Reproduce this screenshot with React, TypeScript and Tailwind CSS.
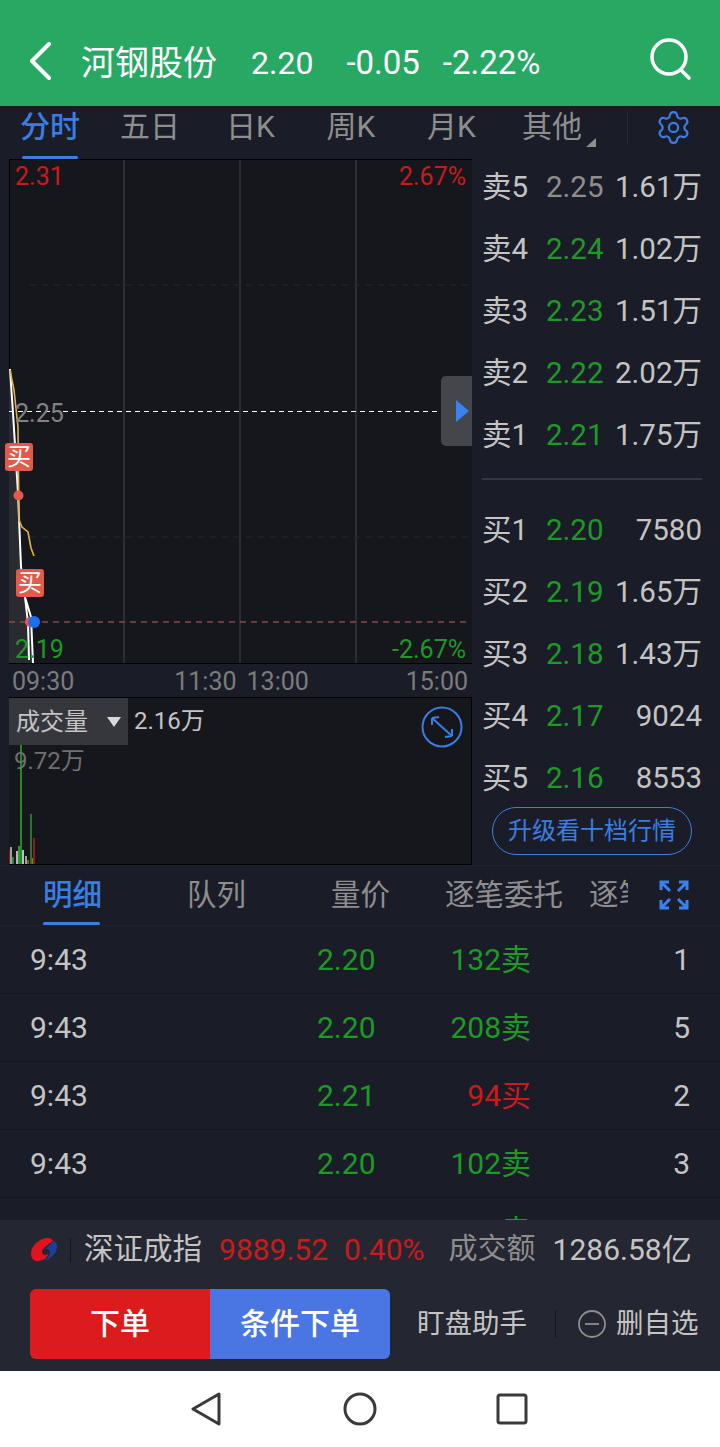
import { Settings } from "lucide-react";

const asks = [
  { label: "卖5", price: "2.25", vol: "1.61万", flat: true },
  { label: "卖4", price: "2.24", vol: "1.02万" },
  { label: "卖3", price: "2.23", vol: "1.51万" },
  { label: "卖2", price: "2.22", vol: "2.02万" },
  { label: "卖1", price: "2.21", vol: "1.75万" },
];

const bids = [
  { label: "买1", price: "2.20", vol: "7580" },
  { label: "买2", price: "2.19", vol: "1.65万" },
  { label: "买3", price: "2.18", vol: "1.43万" },
  { label: "买4", price: "2.17", vol: "9024" },
  { label: "买5", price: "2.16", vol: "8553" },
];

const trades = [
  { time: "9:43", price: "2.20", up: false, size: "132卖", n: "1" },
  { time: "9:43", price: "2.20", up: false, size: "208卖", n: "5" },
  { time: "9:43", price: "2.21", up: true, size: "94买", n: "2" },
  { time: "9:43", price: "2.20", up: false, size: "102卖", n: "3" },
];

// x, width, top y, colour of the volume bars (page coordinates)
const volumeBars = [
  [8, 2, 850, "#7a1c1c"], [10, 2, 847, "#a0a0a0"], [12, 2, 857, "#1f8a28"], [16, 2, 851, "#b8b8b8"],
  [18, 2, 846, "#2a9a30"], [20, 2, 743, "#1f8a28"], [22, 2, 850, "#c0c0c0"], [25, 2, 856, "#a0a0a0"],
  [27, 2, 860, "#8a5a1c"], [30, 2, 814, "#1f7a28"], [32, 1, 858, "#8a7a1c"], [33, 2, 838, "#8a1c1c"],
] as const;

function BookRow({ label, price, vol, flat }: { label: string; price: string; vol: string; flat?: boolean }) {
  return (
    <div className="flex h-[62px] items-center pl-[10px] pr-[18px] text-[29.500px] leading-none text-[#c4c4c4]">
      <span className="w-[64px]">{label}</span>
      <span className={flat ? "w-[68px] text-[#8e8e8e]" : "w-[68px] text-[#1d9a26]"}>{price}</span>
      <span className="flex-1 text-right">{vol}</span>
    </div>
  );
}

function BuyTag({ className }: { className: string }) {
  return (
    <div className={`absolute flex h-[28px] w-[28px] items-center justify-center rounded-[3px] bg-[#e25a4a] text-[24px] leading-none text-white ${className}`}>
      买
    </div>
  );
}

function ChartDrawing() {
  return (
    <svg className="absolute left-[-1px] top-0" width="462" height="504" viewBox="9 160 462 504">
      <path d="M9 369 L10 369 L13 413 L18 493 L21 567 L25 597 L28 623 L32 617 L33 663 L9 663 Z" fill="#2a2b31" />
      <path d="M124 160V663M240 160V663M356 160V663" stroke="#2c2d33" strokeWidth="2" />
      <path d="M30 285H471M30 537H471" stroke="#26272c" strokeWidth="1" strokeDasharray="6 6" />
      <path d="M9 411.5H471" stroke="#ffffff" strokeWidth="1" strokeDasharray="5 4" />
      <path d="M9 622H471" stroke="#8a4a48" strokeWidth="1.5" strokeDasharray="6 5" />
      <path d="M10 369 L13 413 L18 493 L21 567 L25 597 L28 623 L29 660 M25 597 L31 617 L33 663" fill="none" stroke="#ffffff" strokeWidth="2" />
      <path d="M10 370 L14 390 L18 427 L19 520 L22 527 L28 532 L31 548 L34 556" fill="none" stroke="#e0b440" strokeWidth="1.6" />
      <circle cx="18.5" cy="495.5" r="5" fill="#e25a4a" />
      <circle cx="30" cy="622" r="5" fill="#e25a4a" />
      <circle cx="34" cy="622" r="6" fill="#1d6ff0" />
    </svg>
  );
}

function ShenzhenLogo() {
  return (
    <svg width="28" height="25" viewBox="0 0 28 25">
      <path d="M18 1C10 1 1 8 1 17C1 22 5 25 9 24C14 23 18 20 18 17C16 19 12 18 12 15C12 11 18 8 23 4C22 2 20 1 18 1Z" fill="#e0141e" />
      <path d="M24 4C27 6 28 9 26 14C24 19 18 23 13 24C17 22 20 19 20 15C20 12 17 11 15 12C18 9 21 7 24 4Z" fill="#1c3f9c" />
    </svg>
  );
}

export default function App() {
  return (
    <div className="flex h-[1447px] w-[720px] flex-col overflow-hidden bg-[#1a1d28] font-[Roboto,'Noto_Sans_CJK_SC',sans-serif]">
      {/* title bar */}
      <header className="flex h-[106px] shrink-0 items-end bg-[#27a863] pb-[23px] text-white">
        <svg className="ml-[28px] mb-[3px]" width="24" height="38" viewBox="0 0 24 38" fill="none" stroke="#fff" strokeWidth="4" strokeLinecap="round" strokeLinejoin="round">
          <path d="M21 2 L4 19 L21 36" />
        </svg>
        <span className="ml-[29px] text-[34px] leading-[40px]">河钢股份</span>
        <span className="ml-[34px] text-[32px] leading-[40px]">2.20</span>
        <span className="ml-[33px] text-[33px] leading-[40px]">-0.05</span>
        <span className="ml-[23px] text-[33px] leading-[40px]">-2.22%</span>
        <svg className="ml-auto mr-[28px] mb-[2px]" width="44" height="44" viewBox="0 0 44 44" fill="none" stroke="#fff" strokeWidth="3.500" strokeLinecap="round">
          <circle cx="21" cy="20" r="17" />
          <path d="M33 33 L41 41" />
        </svg>
      </header>

      {/* period tabs */}
      <nav className="relative flex h-[53px] shrink-0 text-[30px] leading-none text-[#8e8e8e]">
        <div className="relative flex w-[100px] justify-center pt-[6px] font-medium text-[#3b7de0]">
          分时
          <span className="absolute bottom-0 left-[22px] h-[3px] w-[56px] rounded-full bg-[#3b7de0]" />
        </div>
        <div className="flex w-[100px] justify-center pt-[6px]">五日</div>
        <div className="flex w-[101px] justify-center pt-[6px]">日K</div>
        <div className="flex w-[100px] justify-center pt-[6px]">周K</div>
        <div className="flex w-[101px] justify-center pt-[6px]">月K</div>
        <div className="relative flex w-[100px] justify-center pt-[6px]">
          其他
          <span className="absolute left-[84px] top-[32px] h-0 w-0 border-b-[9px] border-l-[10px] border-b-[#8e8e8e] border-l-transparent" />
        </div>
        <div className="ml-[25px] mt-[5px] h-[34px] w-px bg-[#262934]" />
        <Settings className="ml-[27px] mt-[3px]" size={37} color="#3b7de0" strokeWidth={1.4} />
      </nav>

      {/* chart + order book */}
      <section className="flex h-[706px] shrink-0">
        <div className="ml-[9px] flex w-[463px] shrink-0 flex-col">
          <div className="relative h-[504px] border-l border-t border-black bg-[#16171d] text-[25px] leading-none">
            <ChartDrawing />
            <span className="absolute left-[5px] top-[4px] text-[#c81c1c]">2.31</span>
            <span className="absolute right-[6px] top-[4px] text-[#c81c1c]">2.67%</span>
            <span className="absolute left-[5px] top-[241px] text-[#828282]">2.25</span>
            <span className="absolute bottom-[1px] left-[5px] text-[#1d9a26]">2.19</span>
            <span className="absolute bottom-[1px] right-[6px] text-[#1d9a26]">-2.67%</span>
            <BuyTag className="left-[-5px] top-[283px]" />
            <BuyTag className="left-[6px] top-[409px]" />
            <div className="absolute right-0 top-[216px] flex h-[70px] w-[31px] items-center justify-end rounded-l-[5px] bg-[#45464c] pr-[3px]">
              <span className="h-0 w-0 border-y-[11px] border-l-[13px] border-y-transparent border-l-[#3b82f0]" />
            </div>
          </div>
          <div className="flex h-[34px] border-t border-black pt-[1px] text-[25px] leading-[34px] text-[#7c7c7c]">
            <span className="ml-[3px]">09:30</span>
            <span className="ml-[100px]">11:30</span>
            <span className="ml-[10px]">13:00</span>
            <span className="ml-auto mr-[4px]">15:00</span>
          </div>
          <div className="relative h-[168px] overflow-hidden border-y border-r border-black bg-[#16171d]">
            {volumeBars.map(([x, w, top, color]) => (
              <span
                key={x}
                className="absolute bottom-0"
                style={{ left: x - 9, width: w, height: 864 - top, backgroundColor: color }}
              />
            ))}
            <div className="absolute left-0 top-0 flex h-[47px] w-[119px] items-center bg-[#36373d] pl-[7px] text-[24px] leading-none text-[#c4c4c4]">
              成交量
              <span className="ml-[19px] h-0 w-0 border-x-[7px] border-t-[10px] border-x-transparent border-t-[#d8d8d8]" />
            </div>
            <span className="absolute left-[125px] top-[11px] text-[24px] leading-none text-[#c4c4c4]">2.16万</span>
            <span className="absolute left-[5px] top-[51px] text-[24px] leading-none text-[#6e6f73]">9.72万</span>
            <svg className="absolute left-[412px] top-[8px]" width="42" height="42" viewBox="0 0 42 42" fill="none" stroke="#3b7de0" strokeWidth="2">
              <circle cx="21" cy="21" r="19.500" />
              <path d="M11 12 L31 30 M11 12 L11 19 M11 12 L18 11 M31 30 L31 23 M31 30 L24 31" />
            </svg>
          </div>
        </div>

        <div className="min-w-0 flex-1">
          <div className="mt-[-2px]">
            {asks.map((row) => (
              <BookRow key={row.label} {...row} />
            ))}
          </div>
          <div className="mx-[10px] mb-[20px] mt-[11px] h-[2px] w-[220px] bg-[#343643]" />
          <div>
            {bids.map((row) => (
              <BookRow key={row.label} {...row} />
            ))}
          </div>
          <button className="ml-[20px] mt-[-3px] flex h-[48px] w-[200px] items-center justify-center rounded-full border border-[#3b7de0] text-[24px] leading-none text-[#3b7de0]">
            升级看十档行情
          </button>
        </div>
      </section>

      {/* detail tabs */}
      <nav className="flex h-[61px] shrink-0 border-y border-[#20232e] text-[29.500px] leading-none text-[#8e8e8e]">
        <div className="relative ml-[43px] w-[57px] whitespace-nowrap pt-[15px] font-medium text-[#3b7de0]">
          明细
          <span className="absolute bottom-0 left-0 h-[3px] w-[57px] rounded-full bg-[#3b7de0]" />
        </div>
        <div className="ml-[87px] w-[57px] whitespace-nowrap pt-[15px]">队列</div>
        <div className="ml-[87px] w-[58px] whitespace-nowrap pt-[15px]">量价</div>
        <div className="ml-[56px] w-[118px] whitespace-nowrap pt-[15px]">逐笔委托</div>
        <div className="ml-[26px] w-[39px] overflow-hidden whitespace-nowrap pt-[15px]">逐笔成交</div>
        <svg className="ml-[31px] mt-[14px]" width="30" height="30" viewBox="0 0 30 30" fill="none" stroke="#3b82f0" strokeWidth="3">
          <path d="M2 10V2H10M2 2L11 11M20 2H28V10M28 2L19 11M2 20V28H10M2 28L11 19M28 20V28H20M28 28L19 19" />
        </svg>
      </nav>

      {/* trade ticks */}
      <main className="h-[294px] shrink-0 overflow-hidden text-[30px] leading-none">
        {trades.map((t, i) => (
          <div key={i} className="flex h-[68px] items-center border-b border-[#14161f] pl-[30px] pr-[30px] pt-[1px]">
            <span className="w-[287px] text-[#c4c4c4]">{t.time}</span>
            <span className="w-[57px] text-[#1d9a26]">{t.price}</span>
            <span className={t.up ? "w-[157px] text-right text-[#c81c1c]" : "w-[157px] text-right text-[#1d9a26]"}>{t.size}</span>
            <span className="flex-1 text-right text-[#c4c4c4]">{t.n}</span>
          </div>
        ))}
        <div className="flex h-[68px] items-center pb-[2px] pl-[30px] pr-[30px]">
          <span className="w-[287px] text-[#c4c4c4]">9:43</span>
          <span className="w-[57px] text-[#1d9a26]">2.20</span>
          <span className="w-[157px] text-right text-[#1d9a26]">98卖</span>
          <span className="flex-1 text-right text-[#c4c4c4]">2</span>
        </div>
      </main>

      {/* index ticker + actions */}
      <footer className="flex h-[151px] shrink-0 flex-col bg-[#242632]">
        <div className="flex h-[58px] items-center pl-[30px] pt-[1px] text-[29.500px] leading-none">
          <ShenzhenLogo />
          <span className="ml-[12px] h-[24px] w-px bg-[#14161f]" />
          <span className="ml-[13px] text-[#c4c4c4]">深证成指</span>
          <span className="ml-[17px] text-[30px] text-[#c81c1c]">9889.52</span>
          <span className="ml-[16px] text-[30px] text-[#c81c1c]">0.40%</span>
          <span className="ml-[24px] text-[29px] text-[#8e8e8e]">成交额</span>
          <span className="ml-[17px] text-[30px] text-[#c4c4c4]">1286.58亿</span>
        </div>
        <div className="mt-[11px] flex items-center pl-[30px]">
          <div className="flex h-[70px] w-[360px] overflow-hidden rounded-[6px] text-[30px] font-medium leading-none text-white">
            <div className="flex w-[180px] items-center justify-center bg-[#dc1c1c]">下单</div>
            <div className="flex w-[180px] items-center justify-center bg-[#4a76e4]">条件下单</div>
          </div>
          <span className="ml-[27px] text-[27.500px] leading-none text-[#c4c4c4]">盯盘助手</span>
          <span className="ml-[28px] h-[28px] w-px bg-[#14161f]" />
          <svg className="ml-[22px]" width="28" height="28" viewBox="0 0 28 28" fill="none" stroke="#8e8e8e" strokeWidth="1.800">
            <circle cx="14" cy="14" r="13" />
            <path d="M7 14H21" />
          </svg>
          <span className="ml-[10px] text-[27.500px] leading-none text-[#c4c4c4]">删自选</span>
        </div>
      </footer>

      {/* system nav */}
      <div className="flex flex-1 items-center bg-white pl-[190px]">
        <svg width="32" height="34" viewBox="0 0 32 34" fill="none" stroke="#3a3a3a" strokeWidth="3" strokeLinejoin="round">
          <path d="M29 2 L3 17 L29 32 Z" />
        </svg>
        <svg className="ml-[121px]" width="34" height="34" viewBox="0 0 34 34" fill="none" stroke="#3a3a3a" strokeWidth="3">
          <circle cx="17" cy="17" r="15" />
        </svg>
        <svg className="ml-[119px]" width="32" height="32" viewBox="0 0 32 32" fill="none" stroke="#3a3a3a" strokeWidth="3">
          <rect x="2" y="2" width="28" height="28" rx="2" />
        </svg>
      </div>
    </div>
  );
}
